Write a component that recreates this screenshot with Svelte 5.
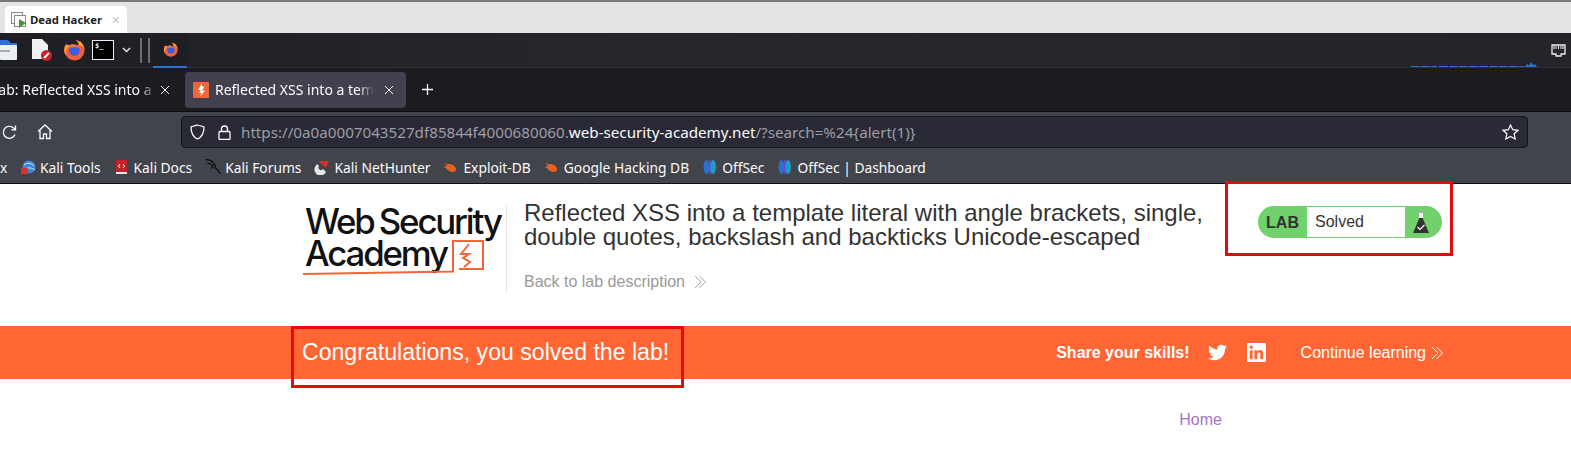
<script>
  const bookmarks = [
    { label: "Kali Tools", icon: "tools" },
    { label: "Kali Docs", icon: "docs" },
    { label: "Kali Forums", icon: "forums" },
    { label: "Kali NetHunter", icon: "hunter" },
    { label: "Exploit-DB", icon: "bug" },
    { label: "Google Hacking DB", icon: "bug" },
    { label: "OffSec", icon: "offsec" },
    { label: "OffSec | Dashboard", icon: "offsec" }
  ];
</script>

{#snippet firefox(size)}
  <svg width={size} height={size} viewBox="0 0 24 24">
    <path d="M3 6 C1 9 1 12 1.500 14 C3 20 8 23.500 12.500 23.500 C19 23.500 23.500 18 23.500 12 C23.500 8 21.500 4 18 1.500 C19 5 17 6 15.500 6.500 C13 5 9 5 7 6.500 C5.500 6 4 6 3 6 Z" fill="#f0603a" />
    <path d="M14 0.500 C19 3 23.500 7 23.500 12 C23 8 20 6.500 18 7 C17 4 15 3 14 0.500 Z" fill="#fdb52e" />
    <path d="M3 6 C1 10 1 15 3 18 C3 13 4 10 7 8 Z" fill="#f7a02d" />
    <circle cx="12.500" cy="12.500" r="5.800" fill="#3f5ce0" />
    <path d="M7 8 C11 6 17 7 19 12 C18 9 14 8 11 9 C9 9.500 8 9 7 8 Z" fill="#f78a2f" />
  </svg>
{/snippet}

{#snippet closeIcon()}
  <svg class="ff-close" width="10" height="10" viewBox="0 0 10 10" fill="none">
    <path d="M1 1 L9 9 M9 1 L1 9" stroke="#fbfbfe" stroke-width="1" />
  </svg>
{/snippet}

<div class="os-tabs">
  <div class="os-tab">
    <svg width="18" height="16" viewBox="0 0 18 16" fill="none">
      <rect x="0.500" y="0.500" width="11" height="11" stroke="#8a8a8a" />
      <rect x="3.500" y="3.500" width="11" height="11" fill="#fff" stroke="#8a8a8a" />
      <path d="M8 7 L15 11 L8 16 Z" fill="#3f9b2f" />
    </svg>
    <span class="os-title">Dead Hacker</span>
    <span class="os-close">✕</span>
  </div>
</div>

<div class="taskbar">
  <div class="launchers">
    <svg class="folder" width="17" height="20" viewBox="0 0 17 20">
      <path d="M0 0 H8 L11 3 H17 V8 H0 Z" fill="#2f6fd8" />
      <rect x="0" y="5" width="17" height="15" rx="1" fill="#eceff3" />
      <rect x="0" y="10" width="10" height="2" fill="#a9adb3" />
    </svg>
    <svg class="file" width="22" height="22" viewBox="0 0 22 22">
      <path d="M1 0 H11 L17 6 V20 H1 Z" fill="#f1f1f1" />
      <circle cx="15.500" cy="16.500" r="5.500" fill="#c9202a" />
      <path d="M13 19 L18 14" stroke="#fff" stroke-width="2" />
    </svg>
    <span class="fox">{@render firefox(22)}</span>
    <span class="term">$_</span>
    <svg class="chev" width="9" height="6" viewBox="0 0 9 6" fill="none">
      <path d="M1 1 L4.500 4.500 L8 1" stroke="#e4e4e4" stroke-width="1.500" />
    </svg>
    <span class="bar"></span>
    <span class="bar second"></span>
    <div class="running">{@render firefox(15)}</div>
  </div>
  <div class="tray">
    <svg class="graph" width="127" height="6" viewBox="0 0 127 6" fill="none">
      <path d="M0 5.500 H26 M28 5.500 H112 M114 5.500 H113" stroke="#2f6fd0" stroke-width="1" stroke-dasharray="9 1" />
      <path d="M114 6 L116 3 L118 4.500 L120 1 L122 4 L124 3 L126 6 Z" fill="#2f6fd0" />
    </svg>
    <svg class="net" width="15" height="13" viewBox="0 0 15 13" fill="none">
      <path d="M1 1 H14 V10 H10 V12 H5 V10 H1 Z" fill="#26282e" stroke="#eee" stroke-width="1.300" />
      <path d="M3 2 V5 M5 2 V5 M7.500 2 V5 M10 2 V5 M12 2 V5" stroke="#eee" />
    </svg>
  </div>
</div>

<div class="ff-tabs">
  <div class="ff-tab first">
    <span class="ff-title clipped">Lab: Reflected XSS into a template</span>
    {@render closeIcon()}
  </div>
  <div class="ff-tab active">
    <svg width="16" height="16" viewBox="0 0 16 16">
      <rect width="16" height="16" rx="1" fill="#f0663a" />
      <path d="M9 1.500 L5 8 H8 L6 11 H8.500 L7 14.500 L12 8.500 H9 L11.500 4.500 H9 Z" fill="#fff" />
    </svg>
    <span class="ff-title">Reflected XSS into a template</span>
    {@render closeIcon()}
  </div>
  <svg class="plus" width="13" height="13" viewBox="0 0 13 13">
    <path d="M6.500 1 V12 M1 6.500 H12" stroke="#fbfbfe" stroke-width="1.300" />
  </svg>
</div>

<div class="navbar">
  <svg class="reload" width="15" height="15" viewBox="0 0 15 15" fill="none">
    <path d="M13 9.500 A6 6 0 1 1 11 2.500 L13.500 4.500 M13.500 0.500 V4.800 H9.500" stroke="#fbfbfe" stroke-width="1.300" />
  </svg>
  <svg class="home" width="16" height="16" viewBox="0 0 16 16" fill="none">
    <path d="M1 7.500 L8 1 L15 7.500 M3 6 V14.500 H6.500 V10 H9.500 V14.500 H13 V6" stroke="#fbfbfe" stroke-width="1.300" />
  </svg>
  <div class="urlbar">
    <svg width="15" height="16" viewBox="0 0 15 16" fill="none">
      <path d="M7.500 1 L14 3 C14 9 12 13 7.500 15 C3 13 1 9 1 3 Z" stroke="#fbfbfe" stroke-width="1.300" />
    </svg>
    <svg class="lock" width="13" height="15" viewBox="0 0 13 15" fill="none">
      <rect x="1" y="6.500" width="11" height="8" rx="1" stroke="#fbfbfe" stroke-width="1.300" />
      <path d="M3.500 6.500 V4 A3 3 0 0 1 9.500 4 V6.500" stroke="#fbfbfe" stroke-width="1.300" />
    </svg>
    <span class="url">https://0a0a0007043527df85844f4000680060.<b>web-security-academy.net</b>/?search=%24{"{"}alert(1)}</span>
    <svg class="star" width="17" height="16" viewBox="0 0 17 16" fill="none">
      <path d="M8.500 1 L10.700 5.700 L16 6.300 L12.100 9.800 L13.200 15 L8.500 12.400 L3.800 15 L4.900 9.800 L1 6.300 L6.300 5.700 Z" stroke="#fbfbfe" stroke-width="1.200" />
    </svg>
  </div>
</div>

<div class="bookmarks">
  <span class="cut">x</span>
  {#each bookmarks as b}
    <div class="mark">
      <svg width="16" height="16" viewBox="0 0 16 16">
        {#if b.icon === "tools"}
          <circle cx="9" cy="8" r="6.500" fill="#3f86d8" />
          <path d="M4 6 C7 3 11 4 14 7 M6 10 C9 8 12 9 15 11" stroke="#d7e6f7" fill="none" />
          <rect x="1" y="9" width="7" height="6" rx="1" fill="#d8332a" />
        {:else if b.icon === "docs"}
          <rect x="2" y="1" width="11" height="14" fill="#c3202a" />
          <rect x="2" y="13" width="11" height="2" fill="#e8e8e8" />
          <path d="M6 5 L4.500 7 L6 9 M9 5 L10.500 7 L9 9" stroke="#fff" fill="none" />
        {:else if b.icon === "forums"}
          <path d="M0 1 C4 0 7 2 9 5 C11 6 11 8 10 9 C12 10 14 11 15 15 M2 4 C4 4 6 5 8 7 C8 8 7 9 6 9" fill="none" stroke="#0c0c0c" stroke-width="1.200" />
        {:else if b.icon === "hunter"}
          <path d="M1 8 A6 6 0 0 0 12 13 L9 10 A2 2 0 0 1 5 7 L3 5 Z" fill="#e8e8e8" />
          <path d="M5 2 H15 L12 9 L7 4.500 Z" fill="#d6302c" />
        {:else if b.icon === "bug"}
          <ellipse cx="8" cy="9" rx="5.500" ry="3.500" fill="#e9611e" transform="rotate(25 8 9)" />
          <path d="M2 4 L6 8 M1 8 L4 9" stroke="#e9611e" />
        {:else}
          <ellipse cx="4.500" cy="8" rx="3" ry="7" fill="#2d6fd0" />
          <ellipse cx="11" cy="8" rx="3" ry="7" fill="#1d9bd0" />
          <rect x="7.200" y="1" width="1.300" height="14" fill="#7a4ad0" />
        {/if}
      </svg>
      <span>{b.label}</span>
    </div>
  {/each}
</div>

<div class="page">
  <header class="lab-head">
    <div class="logo">
      <div class="logo-line">Web Security</div>
      <div class="logo-line second-line">
        Academy
        <svg class="logo-mark" width="182" height="38" viewBox="0 0 182 38" fill="none">
          <path d="M0 36 L150 33.500 V3 H180 V31 H156" stroke="#f0663a" stroke-width="2" />
          <path d="M166 6 L158 16 H166 L160 20 L167 24 L161 29" stroke="#f0663a" stroke-width="2" />
        </svg>
      </div>
    </div>
    <div class="title-block">
      <h2>Reflected XSS into a template literal with angle brackets, single, double quotes, backslash and backticks Unicode-escaped</h2>
      <a class="back" href="#top">Back to lab description
        <svg width="14" height="14" viewBox="0 0 14 14" fill="none">
          <path d="M2 1 L8 7 L2 13 M6.500 1 L12.500 7 L6.500 13" stroke="#aaa" />
        </svg>
      </a>
    </div>
    <div class="status">
      <span class="lab">LAB</span>
      <span class="solved">Solved</span>
      <span class="flask">
        <svg width="16" height="23" viewBox="0 0 16 23">
          <rect x="5" y="0" width="6" height="2" fill="#aaa" />
          <path d="M6 2 H10 V8 L16 22 H0 L6 8 Z" fill="#333332" />
          <path d="M6 2 H10 V7 H6 Z" fill="#eef6ee" />
          <path d="M4.500 16 L7 18.500 L11.500 14" stroke="#fff" fill="none" stroke-width="1.200" />
        </svg>
      </span>
    </div>
    <div class="mark-box lab-box"></div>
  </header>

  <section class="banner">
    <h4>Congratulations, you solved the lab!</h4>
    <div class="share">
      <span class="share-text">Share your skills!</span>
      <svg class="twitter" width="19" height="19" viewBox="0 0 24 24" fill="#fff">
        <path d="M23.953 4.570a10 10 0 01-2.825.775 4.958 4.958 0 002.163-2.723c-.951.555-2.005.959-3.127 1.184a4.920 4.920 0 00-8.384 4.482C7.690 8.095 4.067 6.130 1.640 3.162a4.822 4.822 0 00-.666 2.475c0 1.710.870 3.213 2.188 4.096a4.904 4.904 0 01-2.228-.616v.060a4.923 4.923 0 003.946 4.827 4.996 4.996 0 01-2.212.085 4.936 4.936 0 004.604 3.417 9.867 9.867 0 01-6.102 2.105c-.390 0-.779-.023-1.170-.067a13.995 13.995 0 007.557 2.209c9.053 0 13.998-7.496 13.998-13.985 0-.210 0-.420-.015-.630A9.935 9.935 0 0024 4.590z" />
      </svg>
      <svg class="linkedin" width="19" height="19" viewBox="0 0 24 24" fill="#fff">
        <path d="M20.447 20.452h-3.554v-5.569c0-1.328-.027-3.037-1.852-3.037-1.853 0-2.136 1.445-2.136 2.939v5.667H9.351V9h3.414v1.561h.046c.477-.9 1.637-1.850 3.370-1.850 3.601 0 4.267 2.370 4.267 5.455v6.286zM5.337 7.433a2.062 2.062 0 01-2.063-2.065 2.064 2.064 0 112.063 2.065zm1.782 13.019H3.555V9h3.564v11.452zM22.225 0H1.771C.792 0 0 .774 0 1.729v20.542C0 23.227.792 24 1.771 24h20.451C23.200 24 24 23.227 24 22.271V1.729C24 .774 23.200 0 22.222 0h.003z" />
      </svg>
      <a class="continue" href="#top">Continue learning
        <svg width="14" height="14" viewBox="0 0 14 14" fill="none">
          <path d="M2 1 L8 7 L2 13 M6.500 1 L12.500 7 L6.500 13" stroke="#fff" />
        </svg>
      </a>
    </div>
    <div class="mark-box done-box"></div>
  </section>

  <nav class="site-nav"><a href="#top">Home</a></nav>
</div>

<style>
  :global(body) {
    margin: 0;
    overflow: hidden;
    background: #fff;
  }
  .os-tabs {
    height: 31px;
    background: #e3e4e6;
    border-top: 2px solid #77787a;
    display: flex;
    align-items: flex-end;
    padding-left: 5px;
  }
  .os-tab {
    width: 122px;
    height: 27px;
    box-sizing: border-box;
    background: #fff;
    border-radius: 4px 4px 0 0;
    display: flex;
    align-items: center;
    padding-left: 6px;
    font-family: "Open Sans", sans-serif;
  }
  .os-title {
    margin-left: 1px;
    font-size: 11.300px;
    font-weight: 700;
    color: #222;
  }
  .os-close {
    margin-left: 9px;
    font-size: 11px;
    color: #c4c4c4;
  }
  .taskbar {
    height: 35px;
    box-sizing: border-box;
    background: linear-gradient(90deg, #1d1f24, #25272d 40%, #23252b);
    border-bottom: 1px solid #2f3136;
    display: flex;
    justify-content: space-between;
  }
  .launchers {
    display: flex;
    align-items: center;
    position: relative;
  }
  .folder {
    margin-left: 0;
  }
  .file {
    margin-left: 14px;
  }
  .fox {
    margin-left: 10px;
    display: flex;
  }
  .term {
    margin-left: 7px;
    width: 22px;
    height: 20px;
    box-sizing: border-box;
    background: #000;
    border: 1px solid #eee;
    color: #eee;
    font: 700 7px/10px "DejaVu Sans Mono", monospace;
    padding-left: 2px;
  }
  .chev {
    margin-left: 8px;
  }
  .bar {
    width: 2px;
    height: 25px;
    background: #6d6e72;
    margin-left: 9px;
  }
  .bar.second {
    margin-left: 6px;
  }
  .running {
    margin-left: 3px;
    width: 34px;
    height: 35px;
    box-sizing: border-box;
    border-bottom: 2px solid #2f6fd0;
    display: flex;
    align-items: center;
    justify-content: center;
    background: #1c1e23;
  }
  .tray {
    display: flex;
    align-items: center;
    padding-right: 5px;
    height: 34px;
  }
  .graph {
    align-self: flex-end;
    margin-right: 13px;
  }
  .ff-tabs {
    height: 44px;
    background: #1c1b22;
    border-bottom: 1px solid #0c0c0d;
    box-sizing: border-box;
    display: flex;
    align-items: center;
    font-family: "Noto Sans", sans-serif;
    font-size: 14px;
    color: #fbfbfe;
  }
  .ff-tab {
    height: 36px;
    box-sizing: border-box;
    display: flex;
    align-items: center;
    border-radius: 4px;
    overflow: hidden;
  }
  .ff-tab.first {
    width: 185px;
    padding-right: 15px;
    justify-content: flex-end;
  }
  .ff-tab.active {
    width: 221px;
    background: #42414d;
    padding: 0 12px 0 8px;
    gap: 6px;
  }
  .ff-title {
    flex: 1;
    line-height: 37px;
    white-space: nowrap;
    overflow: hidden;
    -webkit-mask-image: linear-gradient(90deg, #000 90%, transparent);
    mask-image: linear-gradient(90deg, #000 90%, transparent);
  }
  .clipped {
    margin-left: -9px;
    flex: none;
    width: 165px;
  }
  .ff-close {
    margin-left: 4px;
    flex: none;
  }
  .plus {
    margin-left: 15px;
  }
  .navbar {
    height: 36px;
    box-sizing: border-box;
    background: #42444b;
    display: flex;
    align-items: flex-end;
    padding-left: 2px;
  }
  .reload {
    margin-bottom: 8px;
  }
  .home {
    margin: 0 0 8px 20px;
  }
  .urlbar {
    margin-left: 128px;
    width: 1347px;
    height: 32px;
    box-sizing: border-box;
    background: #292a35;
    border: 1px solid #141418;
    border-radius: 4px;
    display: flex;
    align-items: center;
    padding: 0 8px;
    font-family: "Noto Sans", sans-serif;
    font-size: 15.200px;
    color: #9d9da6;
  }
  .lock {
    margin-left: 13px;
  }
  .url {
    margin-left: 10px;
    flex: 1;
    white-space: nowrap;
  }
  .url b {
    font-weight: 400;
    color: #fbfbfe;
  }
  .bookmarks {
    height: 36px;
    box-sizing: border-box;
    background: #42444b;
    border-bottom: 1px solid #101014;
    padding-top: 3px;
    display: flex;
    align-items: center;
    gap: 13px;
    font-family: "Noto Sans", sans-serif;
    font-size: 13.800px;
    color: #fbfbfe;
  }
  .cut {
    width: 7px;
  }
  .mark {
    display: flex;
    align-items: center;
    gap: 4px;
  }
  .page {
    font-family: "Liberation Sans", Arial, sans-serif;
  }
  .lab-head {
    height: 142px;
    box-sizing: border-box;
    padding: 21px 0 0 305px;
    display: flex;
    align-items: flex-start;
    position: relative;
  }
  .logo {
    width: 202px;
    height: 87px;
    box-sizing: border-box;
    border-right: 1px solid #e6e6e6;
    font-family: "Inter", sans-serif;
    font-size: 34.800px;
    font-weight: 500;
    line-height: 33px;
    letter-spacing: -2.150px;
    word-spacing: -2px;
    color: #111;
    white-space: nowrap;
    flex: none;
  }
  .logo-line {
    position: relative;
  }
  .second-line {
    margin-top: -1px;
  }
  .logo-mark {
    position: absolute;
    left: -2px;
    top: 1px;
  }
  .title-block {
    margin-left: 17px;
    width: 700px;
    flex: none;
    color: #333332;
  }
  h2 {
    margin: -4px 0 0;
    font-size: 24px;
    font-weight: 400;
    line-height: 24px;
  }
  .back {
    display: flex;
    align-items: center;
    gap: 8px;
    margin-top: 24px;
    font-size: 16px;
    color: #999;
    text-decoration: none;
  }
  .status {
    margin: 1px 0 0 34px;
    width: 184px;
    height: 32px;
    flex: none;
    box-sizing: border-box;
    background: #70d16d;
    border-radius: 16px;
    display: flex;
    align-items: stretch;
    font-size: 16px;
    color: #333332;
  }
  .lab {
    width: 49px;
    text-align: center;
    font-weight: 700;
    line-height: 33px;
    flex: none;
  }
  .solved {
    width: 98px;
    background: #fff;
    margin: 1px 0;
    padding-left: 8px;
    box-sizing: border-box;
    line-height: 29px;
    flex: none;
  }
  .flask {
    flex: 1;
    display: flex;
    align-items: center;
    justify-content: center;
    padding-right: 5px;
  }
  .banner {
    height: 53px;
    box-sizing: border-box;
    background: #ff6633;
    color: #fff;
    padding: 0 127px 0 302px;
    display: flex;
    align-items: center;
    justify-content: space-between;
    position: relative;
  }
  h4 {
    margin: 0;
    font-size: 23.100px;
    font-weight: 400;
  }
  .share {
    display: flex;
    align-items: center;
    font-size: 16px;
  }
  .share-text {
    font-weight: 700;
  }
  .twitter {
    margin-left: 18px;
  }
  .linkedin {
    margin-left: 20px;
  }
  .continue {
    margin-left: 35px;
    display: flex;
    align-items: center;
    gap: 4px;
    color: #fff;
    text-decoration: none;
  }
  .mark-box {
    position: absolute;
    box-sizing: border-box;
    border: 3px solid #e30b0b;
    pointer-events: none;
  }
  .lab-box {
    left: 1225px;
    top: -3px;
    width: 228px;
    height: 75px;
  }
  .done-box {
    left: 291px;
    top: 0;
    width: 393px;
    height: 62px;
  }
  .site-nav {
    padding: 32px 349px 0 0;
    text-align: right;
    font-size: 16px;
  }
  .site-nav a {
    color: #a871c4;
    text-decoration: none;
  }
</style>
